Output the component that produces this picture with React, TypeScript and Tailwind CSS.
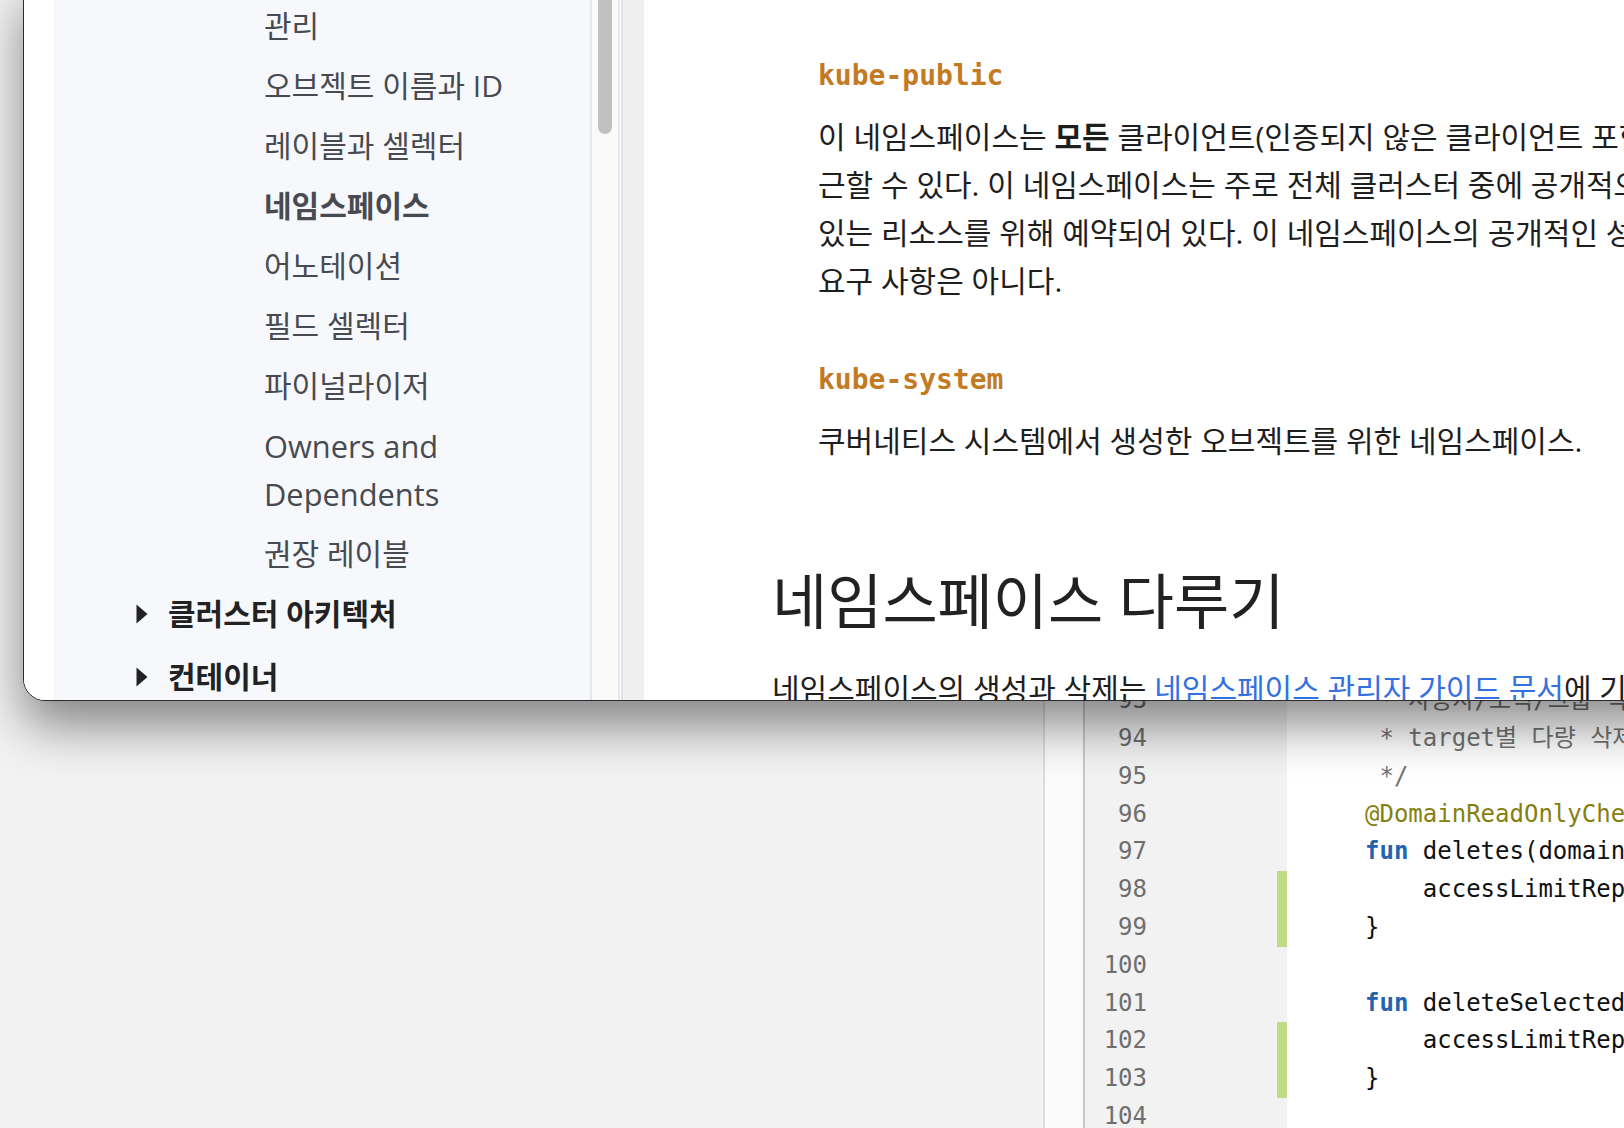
import React from "react";

const sideFont = "font-['Open_Sans','Noto_Sans_CJK_KR',sans-serif]";
const mono = "font-['DejaVu_Sans_Mono','Noto_Sans_CJK_KR',monospace]";

type Seg = { t: string; c?: string };
const codeRows: { n: number; segs: Seg[]; mark?: boolean }[] = [
  { n: 92, segs: [{ t: " * 접근 제한 정보 삭제", c: "text-[#737373]" }] },
  { n: 93, segs: [{ t: " * 사용자/조직/그룹 삭제", c: "text-[#737373]" }] },
  { n: 94, segs: [{ t: " * target별 다량 삭제", c: "text-[#737373]" }] },
  { n: 95, segs: [{ t: " */", c: "text-[#737373]" }] },
  { n: 96, segs: [{ t: "@DomainReadOnlyCheck", c: "text-[#858010]" }] },
  {
    n: 97,
    segs: [
      { t: "fun", c: "text-[#2463b0] font-bold" },
      { t: " deletes(domainId: Long, target: AccessLimitTarget) {" },
    ],
  },
  { n: 98, segs: [{ t: "    accessLimitRepository.deleteAll(domainId, target)" }], mark: true },
  { n: 99, segs: [{ t: "}" }], mark: true },
  { n: 100, segs: [{ t: "" }] },
  {
    n: 101,
    segs: [
      { t: "fun", c: "text-[#2463b0] font-bold" },
      { t: " deleteSelected(domainId: Long, ids: List<Long>) {" },
    ],
  },
  { n: 102, segs: [{ t: "    accessLimitRepository.deleteSelected(domainId, ids)" }], mark: true },
  { n: 103, segs: [{ t: "}" }], mark: true },
  { n: 104, segs: [{ t: "" }] },
];

function Triangle() {
  return (
    <svg width="12" height="20" viewBox="0 0 12 20" className="shrink-0">
      <path d="M0.5 0.5 L11.5 10 L0.5 19.5 Z" fill="#222222" />
    </svg>
  );
}

function Ide() {
  return (
    <div className="absolute left-[1043px] top-[644.4px] right-0 bottom-0 flex bg-white">
      <div className="w-[2px] bg-[#dcdcdc]" />
      <div className="w-[38px] bg-[#fbfbfb]" />
      <div className="w-[2px] bg-[#c9c9c9]" />
      <div className={`w-[202px] bg-[#f2f2f2] ${mono} text-[24px] text-[#6e6e6e]`}>
        {codeRows.map((r) => (
          <div key={r.n} className="h-[37.8px] flex items-center">
            <div className="w-[62px] text-right leading-[37.8px]">{r.n}</div>
            <div className="flex-1" />
            <div className={`w-[10px] h-full ${r.mark ? "bg-[#bddc85]" : ""}`} />
          </div>
        ))}
      </div>
      <div className={`flex-1 overflow-hidden bg-white pl-[78px] ${mono} text-[24px] text-[#111111]`}>
        {codeRows.map((r) => (
          <div key={r.n} className="h-[37.8px] leading-[37.8px] whitespace-pre">
            {r.segs.map((s, i) => (
              <span key={i} className={s.c}>
                {s.t}
              </span>
            ))}
          </div>
        ))}
      </div>
    </div>
  );
}

function Sidebar() {
  const sub = `leading-[48px] text-[30px] text-[#474b51] whitespace-nowrap`;
  return (
    <div className={`w-[536px] bg-[#f7f8fc] ${sideFont} pt-[21px]`}>
      <div className="flex flex-col gap-[12px]">
        <div className="pl-[210px]">
          <div className={sub}>관리</div>
        </div>
        <div className="pl-[210px]">
          <div className={sub}>오브젝트 이름과 ID</div>
        </div>
        <div className="pl-[210px]">
          <div className={sub}>레이블과 셀렉터</div>
        </div>
        <div className="pl-[210px]">
          <div className={`${sub} font-bold text-[#3b3f45]`}>네임스페이스</div>
        </div>
        <div className="pl-[210px]">
          <div className={sub}>어노테이션</div>
        </div>
        <div className="pl-[210px]">
          <div className={sub}>필드 셀렉터</div>
        </div>
        <div className="pl-[210px]">
          <div className={sub}>파이널라이저</div>
        </div>
        <div className="pl-[210px]">
          <div className="leading-[48px] text-[30.8px] text-[#474b51] whitespace-nowrap">
            Owners and
            <br />
            Dependents
          </div>
        </div>
        <div className="pl-[210px]">
          <div className={sub}>권장 레이블</div>
        </div>
        <div className="pl-[82px] flex items-center gap-[20px]">
          <Triangle />
          <div className="leading-[48px] text-[30px] font-bold text-[#222222] whitespace-nowrap">
            클러스터 아키텍처
          </div>
        </div>
        <div className="pl-[82px] flex items-center gap-[20px] mt-[3px]">
          <Triangle />
          <div className="leading-[48px] text-[30px] font-bold text-[#222222] whitespace-nowrap">
            컨테이너
          </div>
        </div>
      </div>
    </div>
  );
}

function Main() {
  const body = "text-[30px] leading-[48px] text-[#1e1e1e] whitespace-nowrap";
  const code = `${mono} font-bold text-[28px] leading-[48px] text-[#c27a23] whitespace-nowrap`;
  return (
    <div className={`flex-1 bg-white pl-[128px] pt-[71px] ${sideFont} overflow-hidden`}>
      <div className="pl-[46px]">
        <div className={code}>kube-public</div>
        <div className="mt-[13px]">
          <div className={body}>
            이 네임스페이스는 <span className="font-bold">모든</span> 클라이언트(인증되지 않은 클라이언트 포함)가 읽기 권한으로 접
          </div>
          <div className={body}>근할 수 있다. 이 네임스페이스는 주로 전체 클러스터 중에 공개적으로 드러나서 읽을 수</div>
          <div className={body}>있는 리소스를 위해 예약되어 있다. 이 네임스페이스의 공개적인 성격은 단지 관례이지</div>
          <div className={body}>요구 사항은 아니다.</div>
        </div>
        <div className={`${code} mt-[51px]`}>kube-system</div>
        <div className="mt-[13px]">
          <div className={body}>쿠버네티스 시스템에서 생성한 오브젝트를 위한 네임스페이스.</div>
        </div>
      </div>
      <div className="mt-[96px] text-[60px] leading-[80px] text-[#222222] whitespace-nowrap">
        네임스페이스 다루기
      </div>
      <div className={`${body} mt-[24px]`}>
        네임스페이스의 생성과 삭제는 <span className="text-[#3371e3]">네임스페이스 관리자 가이드 문서</span>에 기술되어 있다.
      </div>
    </div>
  );
}

function BrowserWindow() {
  return (
    <div className="absolute left-[23px] top-[-20px] w-[1720px] h-[721px] rounded-bl-[22px] border border-[#2b2b2b] overflow-hidden bg-white shadow-[0_25px_50px_rgba(0,0,0,0.45)] flex">
      <div className="w-[30px] bg-white" />
      <Sidebar />
      <div className="w-[2px] bg-[#e6e6e6]" />
      <div className="w-[26px] bg-[#fafafa] px-[6px]">
        <div className="h-[153px] w-full rounded-b-[8px] bg-[#c1c1c1]" />
      </div>
      <div className="w-[2px] bg-[#e8e8e8]" />
      <div className="w-[1px] bg-white" />
      <div className="w-[2px] bg-[#dde2ea]" />
      <div className="w-[21px] bg-[#efefef]" />
      <Main />
    </div>
  );
}

export default function App() {
  return (
    <div className="relative w-[1624px] h-[1128px] overflow-hidden bg-[#f2f2f2]">
      <Ide />
      <BrowserWindow />
    </div>
  );
}
